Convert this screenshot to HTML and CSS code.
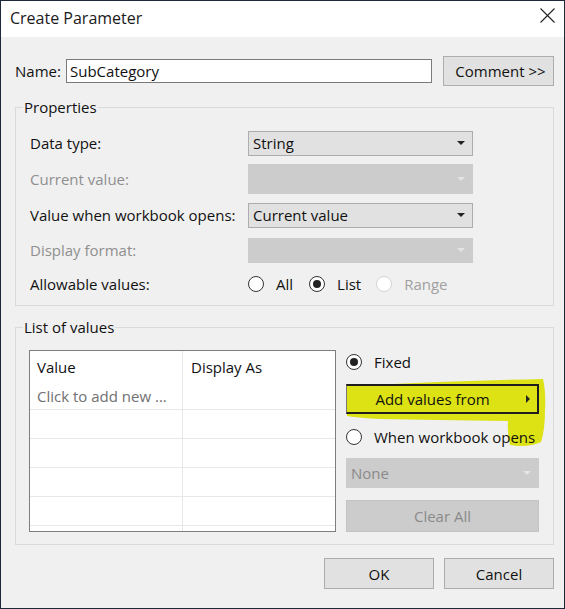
FILE: index.html
```html
<!DOCTYPE html>
<html>
<head>
<meta charset="utf-8">
<link rel="stylesheet" href="styles.css">
</head>
<body>
<div class="window">
  <div class="titlebar">
    <span class="title">Create Parameter</span>
    <svg class="close" width="15" height="15" viewBox="0 0 15 15"><path d="M0.5 0.5 L14.5 14.5 M14.5 0.5 L0.5 14.5" stroke="#222" stroke-width="1.1" fill="none"/></svg>
  </div>
  <div class="body">
    <div class="name-row">
      <span class="name-label">Name:</span>
      <div class="textbox">SubCategory</div>
      <div class="btn comment">Comment &gt;&gt;</div>
    </div>

    <fieldset class="group">
      <legend>Properties</legend>
      <div class="prop-grid">
        <div class="lbl">Data type:</div>
        <div class="combo"><span>String</span><i class="arrow"></i></div>

        <div class="lbl disabled">Current value:</div>
        <div class="combo off tall"><span></span><i class="arrow"></i></div>

        <div class="lbl">Value when workbook opens:</div>
        <div class="combo"><span>Current value</span><i class="arrow"></i></div>

        <div class="lbl disabled">Display format:</div>
        <div class="combo off"><span></span><i class="arrow"></i></div>

        <div class="lbl">Allowable values:</div>
        <div class="radios">
          <span class="radio"><i class="dot"></i>All</span>
          <span class="radio"><i class="dot checked"></i>List</span>
          <span class="radio off"><i class="dot"></i>Range</span>
        </div>
      </div>
    </fieldset>

    <fieldset class="group lov">
      <legend>List of values</legend>
      <div class="lov-inner">
        <div class="table">
          <div class="cell head c1">Value</div>
          <div class="cell head c2">Display As</div>
          <div class="cell row c1 hint">Click to add new ...</div>
          <div class="cell row c2"></div>
          <div class="cell row c1"></div>
          <div class="cell row c2"></div>
          <div class="cell row c1"></div>
          <div class="cell row c2"></div>
          <div class="cell row c1"></div>
          <div class="cell row c2"></div>
          <div class="cell row c1"></div>
          <div class="cell row c2"></div>
          <div class="cell fill c1"></div>
          <div class="cell fill c2"></div>
        </div>
        <div class="side">
          <span class="radio side-radio"><i class="dot checked"></i>Fixed</span>
          <div class="addwrap">
            <svg class="marker" width="204" height="76" viewBox="0 0 204 76"><path d="M3 8 Q 100 3 199 1 Q 202 14 201 32 Q 201 52 197 64 Q 184 70 166 67 Q 163 54 164 43 Q 90 42 36 41 Q 16 40 3 38 Z" fill="#dce213"/></svg>
            <div class="addbtn"><span>Add values from</span><i class="rarrow"></i></div>
          </div>
          <span class="radio side-radio when"><i class="dot"></i>When workbook opens</span>
          <div class="combo off none"><span>None</span><i class="arrow"></i></div>
          <div class="btn clear">Clear All</div>
        </div>
      </div>
    </fieldset>

    <div class="footer">
      <div class="btn action">OK</div>
      <div class="btn action">Cancel</div>
    </div>
  </div>
</div>
</body>
</html>
```

FILE: styles.css
```css
* { box-sizing: border-box; }
html, body { margin: 0; padding: 0; }
body {
  font-family: "Open Sans", "Noto Sans", sans-serif;
  font-size: 15px;
  color: #111;
  background: #f0f0f0;
}
.window {
  width: 565px;
  height: 609px;
  border: 1px solid #1d2838;
  background: #f0f0f0;
  display: flex;
  flex-direction: column;
}
.titlebar {
  height: 36px;
  background: #fff;
  display: flex;
  align-items: flex-start;
  padding: 6px 9px 0 9px;
}
.title {
  font-size: 16px;
  line-height: 22px;
  color: #1a1a1a;
}
.close { margin-left: auto; margin-top: 1px; }
.body {
  flex: 1;
  padding: 19px 10px 0 14px;
}
.name-row {
  display: flex;
  align-items: center;
  height: 30px;
}
.name-label { width: 51px; }
.textbox {
  width: 366px;
  height: 24px;
  border: 1px solid #7a7a7a;
  background: #fff;
  padding-left: 3px;
  line-height: 22px;
}
.btn {
  background: #e1e1e1;
  border: 1px solid #adadad;
  display: flex;
  align-items: center;
  justify-content: center;
}
.comment {
  margin-left: auto;
  width: 111px;
  height: 30px;
  padding-left: 4px;
}
.group {
  margin: 11px 0 0 0;
  padding: 0;
  border: 1px solid #dadada;
  min-width: 0;
}
.group legend {
  margin-left: 7px;
  padding: 0 1px;
  line-height: 20px;
}
.prop-grid {
  display: grid;
  grid-template-columns: 218px 225px;
  grid-template-rows: 36px 36px 36px 34px 33px;
  align-items: center;
  padding: 8px 0 5px 14px;
}
.lbl.disabled { color: #8f8f8f; }
.combo {
  height: 25px;
  border: 1px solid #adadad;
  background: #e1e1e1;
  display: flex;
  align-items: center;
  padding: 0 7px 0 4px;
}
.combo span { flex: 1; }
.combo.tall { height: 30px; }
.combo.off {
  background: #cccccc;
  border-color: #cccccc;
  color: #8a8a8a;
}
.arrow {
  width: 0;
  height: 0;
  border-left: 4px solid transparent;
  border-right: 4px solid transparent;
  border-top: 4px solid #222;
}
.combo.off .arrow { border-top-color: #e4e4e4; }
.radios {
  display: flex;
  align-items: center;
  gap: 16px;
}
.radio {
  display: inline-flex;
  align-items: center;
  gap: 12px;
}
.radio.off { color: #a0a0a0; margin-left: -1px; }
.dot {
  width: 16px;
  height: 16px;
  border-radius: 50%;
  border: 1px solid #333;
  background: #fff;
  display: flex;
  align-items: center;
  justify-content: center;
  flex: none;
}
.dot.checked::after {
  content: "";
  width: 8px;
  height: 8px;
  border-radius: 50%;
  background: #222;
}
.radio.off .dot { border-color: #d4d4d4; }
.lov-inner {
  display: flex;
  gap: 10px;
  padding: 13px 0 12px 13px;
}
.table {
  width: 307px;
  height: 182px;
  border: 1px solid #7e7e7e;
  background: #fff;
  display: grid;
  grid-template-columns: 153px 152px;
  grid-template-rows: 30px repeat(5, 29px) 1fr;
}
.cell {
  padding-left: 7px;
  display: flex;
  align-items: center;
}
.c1 { border-right: 1px solid #e6e6e6; }
.head { color: #111; padding-top: 2px; }
.row { border-bottom: 1px solid #e8e8e8; }
.hint { color: #707070; padding-top: 2px; }
.c2.head { padding-left: 8px; }
.side {
  width: 196px;
  display: flex;
  flex-direction: column;
}
.side-radio { height: 24px; white-space: nowrap; }
.addwrap {
  position: relative;
  margin-top: 10px;
  height: 30px;
  width: 193px;
}
.marker {
  position: absolute;
  left: -2px;
  top: -6px;
}
.addbtn {
  position: relative;
  height: 30px;
  width: 193px;
  border: 2px solid #1e1e1e;
  border-left: 1px solid #777;
  display: flex;
  align-items: center;
  padding: 0 7px 0 0;
}
.addbtn span { flex: 1; text-align: center; padding-right: 8px; }
.rarrow {
  width: 0;
  height: 0;
  border-top: 4px solid transparent;
  border-bottom: 4px solid transparent;
  border-left: 4px solid #222;
}
.when { margin-top: 11px; position: relative; }
.none {
  margin-top: 9px;
  height: 30px;
  width: 193px;
}
.clear {
  margin-top: 12px;
  height: 32px;
  width: 193px;
  background: #cccccc;
  border-color: #c4c4c4;
  color: #8a8a8a;
}
.footer {
  display: flex;
  justify-content: flex-end;
  gap: 10px;
  margin-top: 13px;
}
.action {
  width: 110px;
  height: 31px;
}
```
